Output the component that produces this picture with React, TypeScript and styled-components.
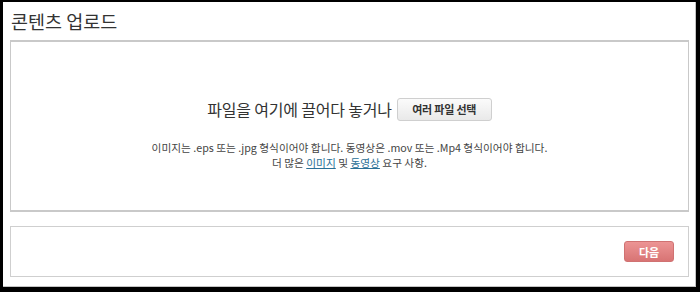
import React from "react";
import styled, { createGlobalStyle } from "styled-components";

const GlobalStyle = createGlobalStyle`
  html, body {
    margin: 0;
    padding: 0;
    background: #000;
  }
  body {
    font-family: "Noto Sans CJK KR", "Noto Sans", "Liberation Sans", sans-serif;
  }
`;

const Frame = styled.div`
  box-sizing: border-box;
  width: 700px;
  height: 292px;
  padding: 2px 4px 5px 3px;
  background: #000;
  display: flex;
`;

const Panel = styled.div`
  box-sizing: border-box;
  flex: 1;
  background: #fff;
  border-right: 1px solid #c4c4c4;
  border-bottom: 1px solid #c4c4c4;
  padding: 0 6px 0 7px;
  display: flex;
  flex-direction: column;
`;

const Title = styled.h1`
  margin: 0;
  height: 38px;
  display: flex;
  align-items: center;
  padding-left: 1px;
  font-size: 18.5px;
  font-weight: 400;
  color: #333;
`;

const DropZone = styled.div`
  box-sizing: border-box;
  height: 172px;
  border: 2px solid #c9c9c9;
  border-left-width: 1px;
  border-right-width: 1px;
  display: flex;
  flex-direction: column;
  align-items: center;
  padding-top: 55px;
`;

const DropRow = styled.div`
  display: flex;
  align-items: center;
  gap: 5px;
`;

const DropText = styled.span`
  font-size: 16px;
  letter-spacing: -0.2px;
  color: #333;
`;

const Button = styled.button<{ $primary?: boolean }>`
  box-sizing: border-box;
  font-family: inherit;
  font-weight: 700;
  font-size: 11px;
  letter-spacing: -0.2px;
  cursor: pointer;
  border-radius: 3px;
  padding: 0;
  display: inline-flex;
  align-items: center;
  justify-content: center;
  width: ${(p) => (p.$primary ? "50px" : "95px")};
  height: ${(p) => (p.$primary ? "21px" : "23px")};
  color: ${(p) => (p.$primary ? "#fff" : "#333")};
  border: 1px solid ${(p) => (p.$primary ? "#d07272" : "#cfcfcf")};
  background: ${(p) =>
    p.$primary
      ? "linear-gradient(#ec9494, #d87474)"
      : "linear-gradient(#fbfbfb, #e9e9e9)"};
`;

const Note = styled.p`
  margin: 19px 0 0;
  font-size: 10.7px;
  line-height: 15px;
  color: #444;
  text-align: center;
`;

const DocLink = styled.a`
  color: #2a6f96;
  text-decoration: underline;
`;

const Footer = styled.div`
  box-sizing: border-box;
  margin-top: 14px;
  height: 51px;
  border: 1px solid #cfcfcf;
  display: flex;
  align-items: center;
  justify-content: flex-end;
  padding-right: 14px;
`;

const App = () => {
  return (
    <>
      <GlobalStyle />
      <Frame>
        <Panel>
          <Title>콘텐츠 업로드</Title>
          <DropZone>
            <DropRow>
              <DropText>파일을 여기에 끌어다 놓거나</DropText>
              <Button>여러 파일 선택</Button>
            </DropRow>
            <Note>
              이미지는 .eps 또는 .jpg 형식이어야 합니다. 동영상은 .mov 또는 .Mp4
              형식이어야 합니다.
              <br />
              더 많은 <DocLink href="#">이미지</DocLink> 및{" "}
              <DocLink href="#">동영상</DocLink> 요구 사항.
            </Note>
          </DropZone>
          <Footer>
            <Button $primary>다음</Button>
          </Footer>
        </Panel>
      </Frame>
    </>
  );
};

export default App;
